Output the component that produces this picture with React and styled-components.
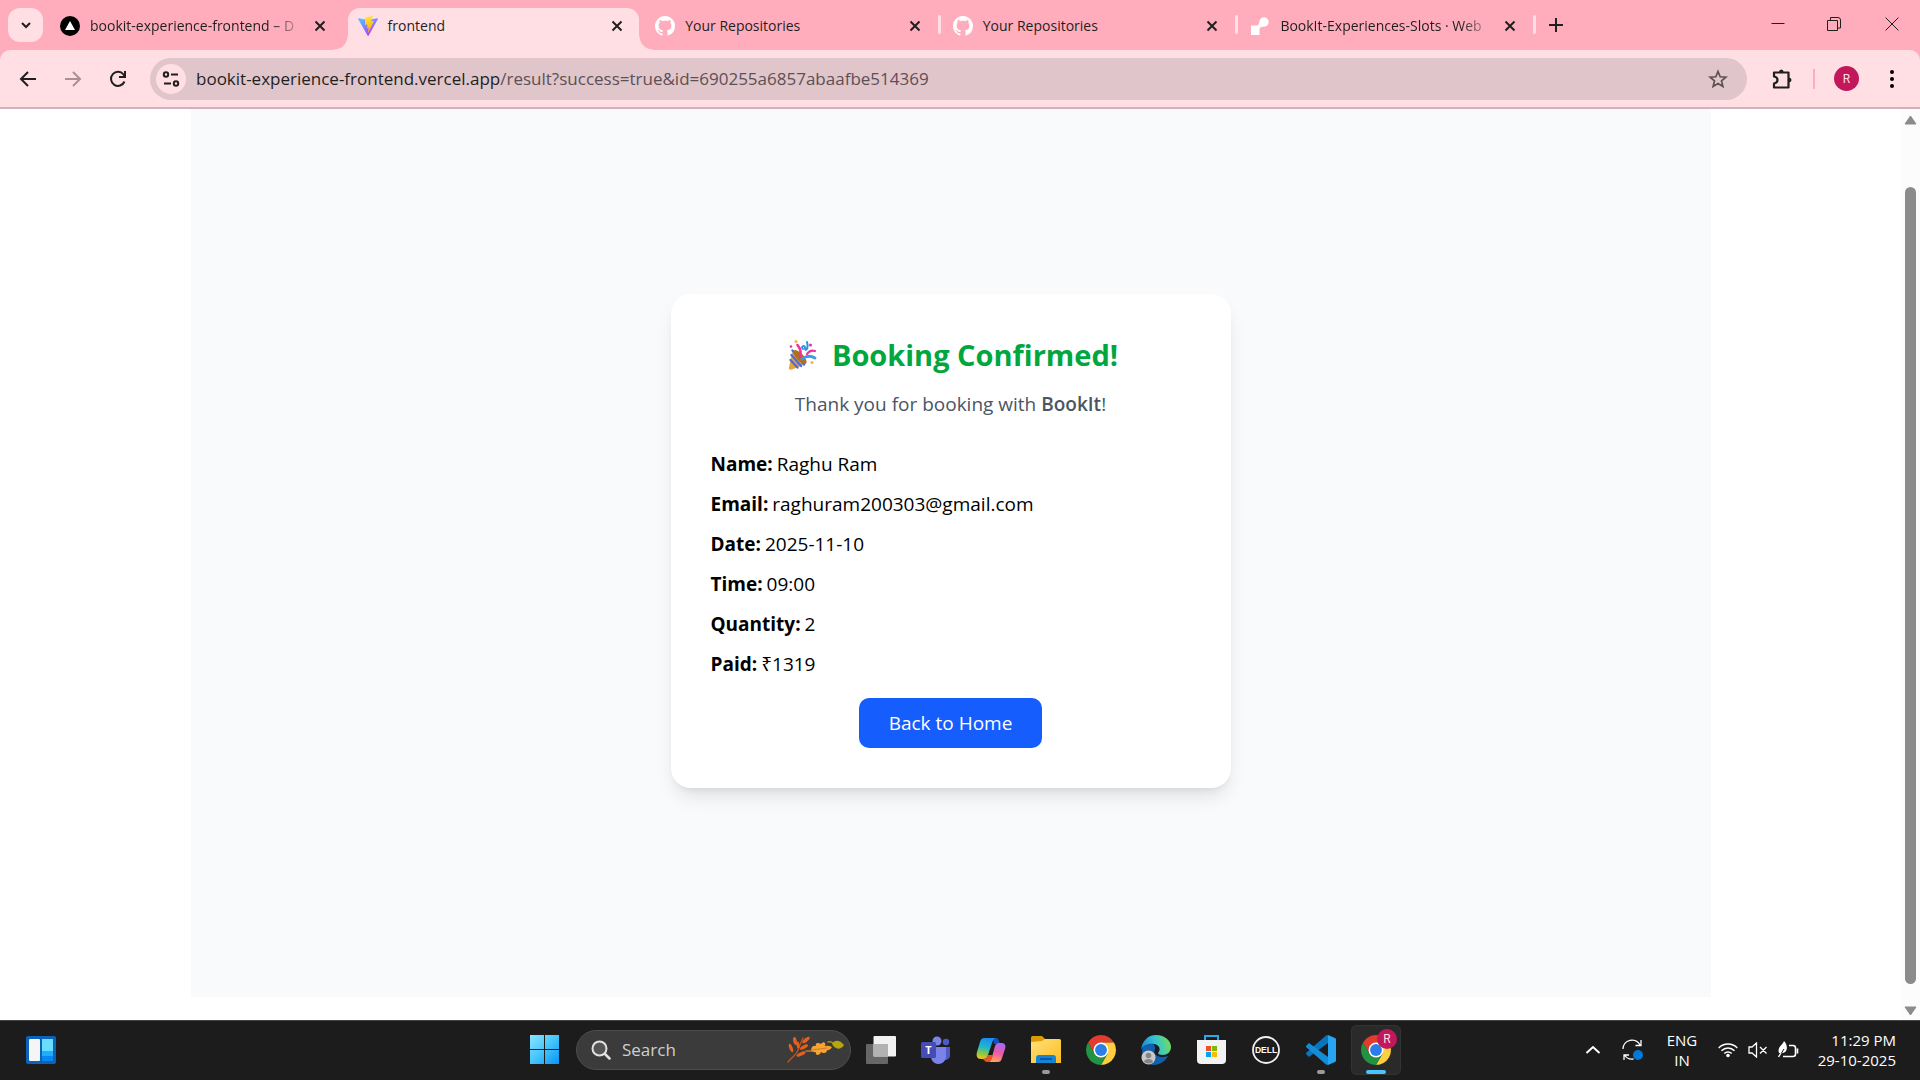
import React from "react";
import styled, { createGlobalStyle, css } from "styled-components";

const Global = createGlobalStyle`
  * { box-sizing: border-box; }
  html, body { margin: 0; height: 100%; }
  #root { height: 100vh; }
  body { font-family: "Open Sans", "Noto Sans", sans-serif; overflow: hidden; background: #fff; }
  svg { display: block; flex: none; }
`;

const ButtonBase = styled.button`
  font: inherit;
  color: inherit;
  background: none;
  border: 0;
  padding: 0;
  cursor: pointer;
`;

const Screen = styled.div`
  height: 100vh;
  display: flex;
  flex-direction: column;
`;

/* ---------- browser frame ---------- */
const TabStrip = styled.header`
  height: 50px;
  flex: none;
  display: flex;
  align-items: stretch;
  background: #ffadbc;
  padding-left: 8px;
  color: #1f1f1f;
`;
const TabSearch = styled(ButtonBase)`
  width: 35px;
  height: 34px;
  margin-top: 8px;
  border-radius: 12px;
  background: #ffdee4;
  display: grid;
  place-items: center;
  flex: none;
`;
const Tabs = styled.div`
  flex: 0 1 1488px;
  min-width: 0;
  margin-left: 7px;
  display: flex;
`;
const Tab = styled.div`
  flex: 1 1 0;
  min-width: 0;
  position: relative;
  margin-top: 8px;
  padding: 0 18px 7px 10px;
  display: flex;
  align-items: center;
  gap: 10px;
  ${(p) => p.$active && css`
    background: #ffdee4;
    border-radius: 12px 12px 0 0;
    margin-right: 6px;
    padding-right: 12px;
    &::before, &::after {
      content: "";
      position: absolute;
      bottom: 0;
      width: 14px;
      height: 14px;
    }
    &::before { left: -14px; background: radial-gradient(circle at 0 0, transparent 13px, #ffdee4 14px); }
    &::after { right: -14px; background: radial-gradient(circle at 100% 0, transparent 13px, #ffdee4 14px); }
  `}
  ${(p) => p.$divided && css`
    &::after {
      content: "";
      position: absolute;
      right: 2px;
      top: 7px;
      width: 3px;
      height: 19px;
      border-radius: 2px;
      background: #ffdee4;
    }
  `}
`;
const TabTitle = styled.span`
  flex: 1;
  min-width: 0;
  font-size: 14px;
  line-height: 20px;
  white-space: nowrap;
  ${(p) => p.$fade && css`mask-image: linear-gradient(to right, #000 86%, transparent 102%);`}
`;
const TabClose = styled(ButtonBase)`
  width: 20px;
  height: 20px;
  display: grid;
  place-items: center;
  flex: none;
`;
const NewTab = styled(ButtonBase)`
  width: 35px;
  height: 34px;
  margin-top: 8px;
  display: grid;
  place-items: center;
`;
const WindowButtons = styled.div`
  margin-left: auto;
  display: flex;
`;
const WindowButton = styled(ButtonBase)`
  width: 57px;
  height: 48px;
  display: grid;
  place-items: center;
`;

const Toolbar = styled.nav`
  height: 59px;
  flex: none;
  display: flex;
  align-items: center;
  padding: 0 6px 0 5px;
  background: #ffdee4;
  border-bottom: 2px solid #cfb3ba;
  border-radius: 10px 10px 0 0;
  color: #1f1f1f;
`;
const ToolbarBack = styled.div`background: #ffadbc; flex: none;`;
const ToolButton = styled(ButtonBase)`
  width: 45px;
  height: 42px;
  display: grid;
  place-items: center;
  flex: none;
  color: ${(p) => (p.$dim ? "#a98f96" : "#1f1f1f")};
`;
const Omnibox = styled.div`
  flex: 1;
  min-width: 0;
  height: 42px;
  margin: 0 12px 0 10px;
  padding: 0 8px 0 6px;
  border-radius: 21px;
  background: #e0c5ca;
  display: flex;
  align-items: center;
`;
const SiteInfo = styled(ButtonBase)`
  width: 30px;
  height: 30px;
  border-radius: 50%;
  background: #ffdee4;
  display: grid;
  place-items: center;
  flex: none;
`;
const Address = styled.span`
  flex: 1;
  margin-left: 10px;
  font-size: 17px;
  line-height: 24px;
  color: #5c5055;
  white-space: nowrap;
  b { font-weight: 400; color: #1f1f1f; }
`;
const StarButton = styled(ButtonBase)`
  width: 42px;
  height: 34px;
  display: grid;
  place-items: center;
`;
const ToolDivider = styled.span`
  width: 2px;
  height: 20px;
  margin: 0 9px;
  background: #ffadbc;
`;
const Avatar = styled.span`
  width: ${(p) => p.$size}px;
  height: ${(p) => p.$size}px;
  border-radius: 50%;
  background: #c2185b;
  color: #ffdee4;
  font-family: Roboto, sans-serif;
  font-size: 12px;
  display: grid;
  place-items: center;
`;

/* ---------- page ---------- */
const Viewport = styled.div`
  flex: 1;
  min-height: 0;
  display: flex;
  background: #fff;
`;
const Page = styled.div`
  flex: 1;
  min-width: 0;
  display: flex;
  justify-content: center;
  padding-bottom: 23px;
`;
const Backdrop = styled.main`
  flex: 0 1 1520px;
  display: flex;
  align-items: center;
  justify-content: center;
  background: #f9fafb;
  padding-bottom: 24px;
`;
const Card = styled.section`
  width: 560px;
  padding: 40px;
  border-radius: 20px;
  background: #fff;
  box-shadow: 0 12px 19px -4px rgba(0, 0, 0, 0.1), 0 5px 8px -5px rgba(0, 0, 0, 0.1);
  display: flex;
  flex-direction: column;
`;
const Title = styled.h1`
  margin: 0 0 13px;
  display: flex;
  align-items: center;
  justify-content: center;
  gap: 14px;
  color: #00a63e;
  font-size: 29px;
  line-height: 42px;
  font-weight: 700;
`;
const Thanks = styled.p`
  margin: 0 0 30px;
  text-align: center;
  color: #4a5565;
  font-size: 19px;
  line-height: 30px;
  strong { font-weight: 600; }
`;
const Details = styled.dl`
  margin: 0 0 19px;
  display: flex;
  flex-direction: column;
  gap: 10px;
  font-size: 19px;
  line-height: 30px;
  color: #000;
`;
const Detail = styled.div`
  display: flex;
  gap: 4px;
  dt { font-weight: 700; }
  dd { margin: 0; }
`;
const HomeButton = styled(ButtonBase)`
  align-self: center;
  height: 50px;
  padding: 0 30px;
  border-radius: 10px;
  background: #155dfc;
  color: #fff;
  font-size: 19px;
`;
const Scrollbar = styled.div`
  width: 19px;
  flex: none;
  background: #fcfcfc;
  display: flex;
  flex-direction: column;
  align-items: center;
  padding: 6px 0 4px;
`;
const ScrollTrack = styled.div`
  flex: 1;
  width: 11px;
  padding: 62px 0 22px;
  display: flex;
`;
const ScrollThumb = styled.div`
  flex: 1;
  border-radius: 6px;
  background: #8b8b8b;
`;

/* ---------- taskbar ---------- */
const Taskbar = styled.footer`
  height: 60px;
  flex: none;
  display: grid;
  grid-template-columns: 1fr auto 1fr;
  align-items: center;
  padding-bottom: 2px;
  background: #1c1c1c;
  border-top: 1px solid #454545;
  color: #fff;
`;
const TaskLeft = styled.div`
  display: flex;
  padding-left: 26px;
`;
const TaskCenter = styled.div`
  display: flex;
  align-items: center;
  gap: 5px;
`;
const TaskButton = styled(ButtonBase)`
  width: 50px;
  height: 50px;
  position: relative;
  display: grid;
  place-items: center;
  border-radius: 6px;
  ${(p) => p.$active && css`background: #2a2a2a; box-shadow: inset 0 0 0 1px #333;`}
  ${(p) => p.$mark && css`
    &::after {
      content: "";
      position: absolute;
      bottom: 1px;
      left: 50%;
      transform: translateX(-50%);
      width: ${p.$active ? 20 : 8}px;
      height: 4px;
      border-radius: 2px;
      background: ${p.$active ? "#4cc2ff" : "#9a9a9a"};
    }
  `}
`;
const ProfileBadge = styled.span`
  position: absolute;
  right: 4px;
  top: 4px;
`;
const SearchBox = styled.label`
  width: 275px;
  height: 40px;
  margin-left: 2px;
  padding: 0 6px 0 14px;
  border-radius: 20px;
  background: #3b3b3b;
  border: 1px solid #4d4d4d;
  display: flex;
  align-items: center;
  gap: 11px;
  input {
    flex: 1;
    min-width: 0;
    padding: 0;
    border: 0;
    outline: 0;
    background: none;
    color: #fff;
    font-family: inherit;
    font-size: 17px;
  }
  input::placeholder { color: #cfcfcf; opacity: 1; }
`;
const Tray = styled.div`
  justify-self: end;
  display: flex;
  align-items: center;
  padding-right: 24px;
  font-size: 15px;
  line-height: 20px;
`;
const TrayButton = styled(ButtonBase)`
  height: 40px;
  width: ${(p) => p.$width}px;
  display: flex;
  align-items: center;
  justify-content: center;
  gap: 10px;
`;
const Language = styled(ButtonBase)`
  width: 58px;
  text-align: center;
`;
const Clock = styled.time`
  width: 91px;
  text-align: right;
  white-space: nowrap;
`;

/* ---------- icons ---------- */
const Stroke = ({ d, size = 20, w = 2, box = 20, ...rest }) => (
  <svg width={size} height={size} viewBox={`0 0 ${box} ${box}`} fill="none" stroke="currentColor" strokeWidth={w} {...rest}>
    <path d={d} />
  </svg>
);
const Cross = () => <Stroke d="M5.500 5.500l9 9M14.500 5.500l-9 9" />;
const VercelIcon = () => (
  <svg width="20" height="20" viewBox="0 0 20 20"><circle cx="10" cy="10" r="10" /><path d="M10 5l5 9H5z" fill="#fff" /></svg>
);
const ViteIcon = () => (
  <svg width="20" height="20" viewBox="0 0 256 257">
    <defs>
      <linearGradient id="va" x1="0" y1="0" x2=".6" y2="1"><stop stopColor="#41d1ff" /><stop offset="1" stopColor="#bd34fe" /></linearGradient>
      <linearGradient id="vb" x1=".4" y1="0" x2=".55" y2="1"><stop stopColor="#ffea83" /><stop offset=".1" stopColor="#ffdd35" /><stop offset="1" stopColor="#ffa800" /></linearGradient>
    </defs>
    <path fill="url(#va)" d="M255.153 37.938L134.897 252.976c-2.483 4.44-8.862 4.466-11.382.048L.875 37.958c-2.746-4.814 1.371-10.646 6.827-9.67l120.385 21.517a6.537 6.537 0 0 0 2.322-.004l117.867-21.483c5.438-.991 9.574 4.796 6.877 9.62z" />
    <path fill="url(#vb)" d="M185.432.063L96.44 17.501a3.268 3.268 0 0 0-2.634 3.014l-5.474 92.456a3.268 3.268 0 0 0 3.997 3.378l24.777-5.718c2.318-.535 4.413 1.507 3.936 3.838l-7.361 36.047c-.495 2.426 1.782 4.5 4.151 3.78l15.304-4.649c2.372-.72 4.652 1.36 4.15 3.788l-11.698 56.621c-.732 3.542 3.979 5.473 5.943 2.437l1.313-2.028 72.516-144.72c1.215-2.423-.88-5.186-3.54-4.672l-25.505 4.922c-2.396.462-4.435-1.77-3.759-4.114l16.646-57.705c.677-2.35-1.37-4.583-3.769-4.113z" />
  </svg>
);
const GitHubIcon = () => (
  <svg width="20" height="20" viewBox="0 0 16 16" fill="#fff">
    <path d="M8 0C3.58 0 0 3.58 0 8c0 3.54 2.29 6.53 5.47 7.59.4.07.55-.17.55-.38 0-.19-.01-.82-.01-1.49-2.01.37-2.53-.49-2.69-.94-.09-.23-.48-.94-.82-1.13-.28-.15-.68-.52-.01-.53.63-.01 1.08.58 1.23.82.72 1.21 1.87.87 2.33.66.07-.52.28-.87.51-1.07-1.78-.2-3.64-.89-3.64-3.95 0-.87.31-1.59.82-2.15-.08-.2-.36-1.02.08-2.12 0 0 .67-.21 2.2.82.64-.18 1.32-.27 2-.27s1.36.09 2 .27c1.53-1.04 2.2-.82 2.2-.82.44 1.1.16 1.92.08 2.12.51.56.82 1.27.82 2.15 0 3.07-1.87 3.75-3.65 3.95.29.25.54.73.54 1.48 0 1.07-.01 1.93-.01 2.2 0 .21.15.46.55.38A8.01 8.01 0 0 0 16 8c0-4.42-3.58-8-8-8z" />
  </svg>
);
const RenderIcon = () => (
  <svg width="20" height="20" viewBox="0 0 20 20" fill="#fff">
    <circle cx="14" cy="6" r="4.700" />
    <path d="M1 9.500h5.500q2.500 0 3-4L14 10.500q-4.500 0-4.500 3V19H1z" />
  </svg>
);
const PartyIcon = () => (
  <svg width="35" height="32" viewBox="-5 0 35 32" fill="none" strokeLinecap="round">
    <path d="M5 11L18 25 4 30.500Q.5 31.500 1 28z" fill="#e8a33a" />
    <path d="M3.500 16l9.500 11M2.500 21l7 7.500M4.500 11.500l11.500 14" stroke="#4a6ee0" strokeWidth="2.400" />
    <ellipse cx="12" cy="18" rx="3.500" ry="9" transform="rotate(-43 12 18)" fill="#b06f20" />
    <path d="M12 18C14 11 11 8 9.500 6" stroke="#f02fa0" strokeWidth="2.600" />
    <path d="M15 10c-3-2 2-5 2-1s4 1 2-6" stroke="#2a94dd" strokeWidth="2" />
    <path d="M14 20c4-3 8-4 13-1" stroke="#3f9be8" strokeWidth="2.800" />
    <path d="M19 15c2-3 5-4 8-3" stroke="#f02fa0" strokeWidth="2.200" />
    <circle cx="8" cy="2.500" r="1.500" fill="#f3b53c" /><circle cx="3" cy="7.500" r="1.300" fill="#e62f9d" />
    <circle cx="22.500" cy="6" r="1.500" fill="#e62f9d" /><circle cx="24" cy="23.500" r="1.500" fill="#f3b53c" />
  </svg>
);
const WidgetsIcon = () => (
  <svg width="30" height="28" viewBox="0 0 30 28">
    <rect width="30" height="28" rx="2" fill="#0b62b8" /><rect x="3" y="3" width="11" height="22" rx="1" fill="#f5f5f5" />
    <rect x="16" y="3" width="11" height="12" fill="#69dcff" /><rect x="16" y="15" width="11" height="5" fill="#22adfa" /><rect x="16" y="20" width="11" height="5" fill="#0788ee" />
  </svg>
);
const WindowsIcon = () => (
  <svg width="29" height="29" viewBox="0 0 29 29">
    <defs><linearGradient id="win" gradientUnits="userSpaceOnUse" x1="0" y1="0" x2="29" y2="29"><stop stopColor="#8ce4ff" /><stop offset=".5" stopColor="#45c5fb" /><stop offset="1" stopColor="#0a93f5" /></linearGradient></defs>
    <path fill="url(#win)" d="M0 0h14v14H0zM15 0h14v14H15zM0 15h14v14H0zM15 15h14v14H15z" />
  </svg>
);
const SearchIcon = () => (
  <svg width="20" height="20" viewBox="0 0 20 20" fill="none" stroke="#e2e2e2" strokeWidth="2" strokeLinecap="round"><circle cx="8.500" cy="8.500" r="7" fill="#555" /><path d="M14 14l4.500 4.500" strokeWidth="2.500" /></svg>
);
const LeavesIcon = () => (
  <svg width="57" height="27" viewBox="0 0 57 27" fill="none" strokeLinecap="round">
    <path d="M1 26C6 20 11 18 12 11L16 2" stroke="#c4501b" strokeWidth="1.400" />
    <g fill="#e4611c"><ellipse cx="8" cy="5" rx="1.800" ry="4" transform="rotate(-12 8 5)" /><ellipse cx="4" cy="12" rx="1.700" ry="4.500" transform="rotate(-20 4 12)" /><ellipse cx="19" cy="4" rx="1.800" ry="4.500" transform="rotate(50 19 4)" /><ellipse cx="17" cy="11" rx="1.700" ry="4.500" transform="rotate(60 17 11)" /><ellipse cx="14" cy="18" rx="1.700" ry="5" transform="rotate(65 14 18)" /><ellipse cx="11" cy="9" rx="1.500" ry="3.500" transform="rotate(-10 11 9)" /></g>
    <path d="M19 15h6" stroke="#c87524" strokeWidth="1.400" />
    <path d="M24 14q1-5 5-4-1-3 2-3 2 0 3 1 2-3 4-1 1 2-.5 3Q41 9 45 11q-2 4-5 3 0 3-3 3-2 0-3-1-1 3-4 3-2-1-1-3-3 1-5-2z" fill="#f6a336" />
    <path d="M25 14l15-2" stroke="#d57920" />
    <path d="M41 6c5-1 4 2 8 2" stroke="#9d9410" strokeWidth="1.500" />
    <path d="M45 8c3-5 8-4 12 1-4 6-9 4-12-1z" fill="#b7a50f" />
  </svg>
);
const TaskViewIcon = () => (
  <svg width="30" height="28" viewBox="0 0 30 28"><rect y="8" width="22" height="20" rx="1" fill="#666" /><rect x="7.500" width="22.500" height="20.500" rx="1" fill="#f2f2f2" /><path d="M7.500 8H22v12.500H7.500z" fill="#b2b2b2" /></svg>
);
const TeamsIcon = () => (
  <svg width="30" height="28" viewBox="0 0 30 28">
    <circle cx="25" cy="6" r="3.200" fill="#5059c9" /><circle cx="16" cy="5" r="4.500" fill="#7b83eb" />
    <path d="M21 11h8v9a5 5 0 0 1-8 3z" fill="#5059c9" /><path d="M9 11h16v9a7.500 7.500 0 0 1-15 1z" fill="#7b83eb" />
    <rect y="6" width="15" height="16" rx="1.500" fill="#454cb5" />
    <text x="7.500" y="18" textAnchor="middle" fontFamily="Open Sans" fontWeight="700" fontSize="11" fill="#fff">T</text>
  </svg>
);
const CopilotIcon = () => (
  <svg width="30" height="28" viewBox="0 0 30 28">
    <defs>
      <linearGradient id="ca" x1=".5" y1="0" x2=".3" y2="1"><stop stopColor="#1b8df0" /><stop offset=".45" stopColor="#22b9c8" /><stop offset=".75" stopColor="#8cc83f" /><stop offset="1" stopColor="#f3c321" /></linearGradient>
      <linearGradient id="cb" x1=".7" y1="0" x2=".4" y2="1"><stop stopColor="#a56af5" /><stop offset=".5" stopColor="#ea5aa8" /><stop offset="1" stopColor="#ffa45a" /></linearGradient>
    </defs>
    <path d="M17 2h3c2 0 2.500 1.500 3 3l1 3h-6z" fill="#1550c0" />
    <path d="M8 2h12c-2 0-3 2-4 5l-4 12c-1 3-2 4-5 4H5c-4 0-5-3-4-7L4 6c1-3 2-4 4-4z" fill="url(#ca)" />
    <path d="M22 26H12c2 0 3-2 4-5l3-11c1-2 2-3 4-3h3c3 0 4 3 3 6l-3 9c-1 3-2 4-4 4z" fill="url(#cb)" />
    <path d="M7 23c3 0 4-1 5-4h5l-1 3c-1 3-2 4-4 4-3 0-3-1-5-3z" fill="#e8542a" />
  </svg>
);
const FolderIcon = () => (
  <svg width="30" height="27" viewBox="0 0 30 27"><defs><linearGradient id="fo" x2="1" y2="1"><stop stopColor="#ffe27a" /><stop offset="1" stopColor="#fbbd20" /></linearGradient></defs><path d="M0 1.500Q0 0 1.500 0H11l3 3v6H0z" fill="#dc9a05" /><path d="M0 6l11-1 3-2h14.500Q30 3 30 4.500V27H0z" fill="url(#fo)" /><path d="M5 27v-5q0-3 3-3h14q3 0 3 3v5z" fill="#1584d4" /><path d="M9 23h12" stroke="#0b4d91" strokeWidth="1.500" /></svg>
);
const ChromeIcon = () => (
  <svg width="30" height="30" viewBox="0 0 48 48">
    <path d="M24 12h20.780A24 24 0 0 0 3.220 12l10.390 18z" fill="#e33b2e" />
    <path d="M34.390 30L24 48a24 24 0 0 0 20.780-36H24z" fill="#ffcd40" />
    <path d="M13.610 30L3.220 12A24 24 0 0 0 24 48l10.390-18z" fill="#229342" />
    <circle cx="24" cy="24" r="12" fill="#fff" /><circle cx="24" cy="24" r="9.500" fill="#2b7de9" />
  </svg>
);
const EdgeIcon = () => (
  <svg width="30" height="30" viewBox="0 0 30 30">
    <defs><linearGradient id="ed" x1="0" y1=".6" x2="1" y2=".4"><stop stopColor="#1688d4" /><stop offset=".5" stopColor="#35c1d6" /><stop offset="1" stopColor="#6ee05a" /></linearGradient></defs>
    <path d="M2 10C7 6 15 8 14 14c-3 6 5 10 13 7-3 6-9 9-15 9C3 29-1 20 2 10z" fill="#1160b0" />
    <path d="M0 15C1 6 7 0 15 0c9 0 15 6 15 12 0 5-4 8-8 8-3 0-5-1-5-2 3-3 2-8-4-9C7 8 2 10 0 15z" fill="url(#ed)" />
    <circle cx="7.500" cy="22.500" r="7" fill="#c9c9c9" /><circle cx="7.500" cy="20.500" r="2.800" fill="#858585" /><path d="M3 27c0-4 9-4 9 0q-4 3-9 0z" fill="#858585" />
  </svg>
);
const StoreIcon = () => (
  <svg width="29" height="29" viewBox="0 0 29 29"><path d="M8 6V1h13v5" fill="none" stroke="#2aa9e8" strokeWidth="2" /><path d="M0 5h29v20q0 4-4 4H4q-4 0-4-4z" fill="#f3f3f3" /><path d="M9 11h5v5H9z" fill="#f25022" /><path d="M15 11h5v5h-5z" fill="#7fba00" /><path d="M9 17h5v5H9z" fill="#00a4ef" /><path d="M15 17h5v5h-5z" fill="#ffb900" /></svg>
);
const DellIcon = () => (
  <svg width="28" height="28" viewBox="0 0 28 28" fontFamily="Liberation Sans" fontWeight="700" fontSize="8.500" fill="#fff"><circle cx="14" cy="14" r="13" fill="none" stroke="#f0f0f0" strokeWidth="1.800" /><text x="14" y="17" textAnchor="middle">DELL</text></svg>
);
const CodeIcon = () => (
  <svg width="30" height="30" viewBox="0 0 30 30"><path d="M22 0v8L3 22l-3-3v-1L20 .5z" fill="#0a75bd" /><path d="M3 8l19 14v8l-2-.5L0 12v-1z" fill="#168cd8" /><path d="M22 0l7 3 1 1v22l-1 1-7 3z" fill="#27a5f2" /></svg>
);
const SyncIcon = () => (
  <svg width="22" height="22" viewBox="0 0 22 22" fill="none" stroke="#fff" strokeWidth="1.300"><path d="M1 10a9 9 0 0 1 17-4M19 1v5.500h-5.500M2 21v-5h5M2.500 16a9 9 0 0 0 9 4" /><circle cx="16" cy="16" r="5" fill="#0078d7" stroke="none" /></svg>
);
const WifiIcon = () => (
  <svg width="20" height="16" viewBox="0 0 20 16" fill="none" stroke="#fff" strokeWidth="1.500"><path d="M.7 6a13 13 0 0 1 18.600 0M3.500 8.800a9 9 0 0 1 13 0M6.300 11.500a5.200 5.200 0 0 1 7.400 0" /><circle cx="10" cy="13.500" r="1.800" fill="#fff" stroke="none" /></svg>
);
const MuteIcon = () => (
  <svg width="20" height="16" viewBox="0 0 20 16" fill="none" stroke="#fff" strokeWidth="1.300"><path d="M1 5h3l4.500-4v14L4 11H1zM12 5l6.500 6.500M18.500 5L12 11.500" /></svg>
);
const BatteryIcon = () => (
  <svg width="21" height="17" viewBox="0 0 21 17" fill="none" stroke="#fff" strokeWidth="1.400"><path d="M11 4.500h4q2.500 0 2.500 2.500v6q0 2.500-2.500 2.500H5M19.500 7.500v5" strokeWidth="1.600" /><path d="M1 12C-1 6 4 5 6 0c4 4 4 11-1 12z" fill="#fff" stroke="none" /><path d="M1 16l5-8" stroke="#1c1c1c" strokeWidth="1" /><path d="M.5 16l2.500-4" /></svg>
);

const TABS = [
  { title: "bookit-experience-frontend – D", icon: <VercelIcon />, fade: true },
  { title: "frontend", icon: <ViteIcon />, active: true },
  { title: "Your Repositories", icon: <GitHubIcon />, divided: true },
  { title: "Your Repositories", icon: <GitHubIcon />, divided: true },
  { title: "BookIt-Experiences-Slots · Web", icon: <RenderIcon />, divided: true, fade: true },
];

const BOOKING = [
  ["Name", "Raghu Ram"],
  ["Email", "raghuram200303@gmail.com"],
  ["Date", "2025-11-10"],
  ["Time", "09:00"],
  ["Quantity", "2"],
  ["Paid", "₹1319"],
];

export default function App() {
  return (
    <Screen>
      <Global />
      <TabStrip>
        <TabSearch aria-label="Search tabs"><Stroke d="M6 8l4 4 4-4" /></TabSearch>
        <Tabs>
          {TABS.map((t, i) => (
            <Tab key={i} $active={t.active} $divided={t.divided}>
              {t.icon}
              <TabTitle $fade={t.fade}>{t.title}</TabTitle>
              <TabClose aria-label="Close tab"><Cross /></TabClose>
            </Tab>
          ))}
        </Tabs>
        <NewTab aria-label="New tab"><Stroke d="M10 3v14M3 10h14" /></NewTab>
        <WindowButtons>
          <WindowButton aria-label="Minimize"><Stroke w={1} d="M3.500 9.500h13" /></WindowButton>
          <WindowButton aria-label="Restore"><Stroke w={1} d="M2.500 6.500h10v10h-10zM5.500 6.500V3.500H13Q15.500 3.500 15.500 6v8h-3" /></WindowButton>
          <WindowButton aria-label="Close"><Stroke w={1} d="M3.500 3.500l13 13M16.500 3.500l-13 13" /></WindowButton>
        </WindowButtons>
      </TabStrip>

      <ToolbarBack>
        <Toolbar>
          <ToolButton aria-label="Back"><Stroke d="M18 10H3M10 3L3 10l7 7" /></ToolButton>
          <ToolButton aria-label="Forward" $dim><Stroke d="M2 10h15M10 3l7 7-7 7" /></ToolButton>
          <ToolButton aria-label="Reload"><Stroke d="M16.500 12.500A7 7 0 1 1 15.500 5.500L17 7.500M17 2v6h-6" /></ToolButton>
          <Omnibox>
            <SiteInfo aria-label="Site information">
              <svg width="18" height="18" viewBox="0 0 18 18" fill="none" stroke="currentColor" strokeWidth="2"><circle cx="4" cy="4.500" r="2.200" /><path d="M9 4.500h7M2 13.500h7" /><circle cx="14" cy="13.500" r="2.200" /></svg>
            </SiteInfo>
            <Address><b>bookit-experience-frontend.vercel.app</b>/result?success=true&amp;id=690255a6857abaafbe514369</Address>
            <StarButton aria-label="Bookmark this tab"><Stroke w={1.7} stroke="#5c5055" d="M10 2.500l2.200 5.300 5.700.4-4.400 3.700 1.400 5.600-4.900-3-4.900 3 1.400-5.600-4.400-3.700 5.700-.4z" /></StarButton>
          </Omnibox>
          <ToolButton aria-label="Extensions">
            <svg width="22" height="22" viewBox="0 0 22 22" fill="none" stroke="currentColor" strokeWidth="2.200"><path d="M3 4.500h14.500V19.500H3v-4q3.500-.5 3.500-3.500T3 8.500z" strokeLinejoin="round" /><path d="M8 4q0-2.500 2.300-2.500T12.600 4zM18 9.700q2.500 0 2.500 2.300T18 14.300z" fill="currentColor" stroke="none" /></svg>
          </ToolButton>
          <ToolDivider />
          <ToolButton aria-label="Profile"><Avatar $size={25}>R</Avatar></ToolButton>
          <ToolButton aria-label="Menu"><svg width="20" height="20" viewBox="0 0 20 20"><circle cx="10" cy="3" r="2" /><circle cx="10" cy="10" r="2" /><circle cx="10" cy="17" r="2" /></svg></ToolButton>
        </Toolbar>
      </ToolbarBack>

      <Viewport>
        <Page>
          <Backdrop>
            <Card>
              <Title><PartyIcon />Booking Confirmed!</Title>
              <Thanks>Thank you for booking with <strong>BookIt</strong>!</Thanks>
              <Details>
                {BOOKING.map(([k, v]) => (
                  <Detail key={k}><dt>{k}:</dt><dd>{v}</dd></Detail>
                ))}
              </Details>
              <HomeButton>Back to Home</HomeButton>
            </Card>
          </Backdrop>
        </Page>
        <Scrollbar>
          <svg width="13" height="10" viewBox="0 0 13 10"><path d="M6.500 1L12 9H1z" fill="#8b8b8b" stroke="#8b8b8b" strokeLinejoin="round" /></svg>
          <ScrollTrack><ScrollThumb /></ScrollTrack>
          <svg width="13" height="10" viewBox="0 0 13 10"><path d="M6.500 9L12 1H1z" fill="#8b8b8b" stroke="#8b8b8b" strokeLinejoin="round" /></svg>
        </Scrollbar>
      </Viewport>

      <Taskbar>
        <TaskLeft><ButtonBase aria-label="Widgets"><WidgetsIcon /></ButtonBase></TaskLeft>
        <TaskCenter>
          <TaskButton aria-label="Start"><WindowsIcon /></TaskButton>
          <SearchBox><SearchIcon /><input aria-label="Search" placeholder="Search" /><LeavesIcon /></SearchBox>
          <TaskButton aria-label="Task view"><TaskViewIcon /></TaskButton>
          <TaskButton aria-label="Teams"><TeamsIcon /></TaskButton>
          <TaskButton aria-label="Copilot"><CopilotIcon /></TaskButton>
          <TaskButton aria-label="File Explorer" $mark><FolderIcon /></TaskButton>
          <TaskButton aria-label="Chrome"><ChromeIcon /></TaskButton>
          <TaskButton aria-label="Edge"><EdgeIcon /></TaskButton>
          <TaskButton aria-label="Store"><StoreIcon /></TaskButton>
          <TaskButton aria-label="Dell"><DellIcon /></TaskButton>
          <TaskButton aria-label="Visual Studio Code" $mark><CodeIcon /></TaskButton>
          <TaskButton aria-label="Chrome, profile R" $mark $active><ChromeIcon /><ProfileBadge><Avatar $size={20}>R</Avatar></ProfileBadge></TaskButton>
        </TaskCenter>
        <Tray>
          <TrayButton aria-label="Show hidden icons" $width={40}><Stroke d="M3.500 13l6.500-6 6.500 6" /></TrayButton>
          <TrayButton aria-label="Update" $width={40}><SyncIcon /></TrayButton>
          <Language>ENG<br />IN</Language>
          <TrayButton aria-label="Network, volume, battery" $width={94}><WifiIcon /><MuteIcon /><BatteryIcon /></TrayButton>
          <Clock>11:29 PM<br />29-10-2025</Clock>
        </Tray>
      </Taskbar>
    </Screen>
  );
}
